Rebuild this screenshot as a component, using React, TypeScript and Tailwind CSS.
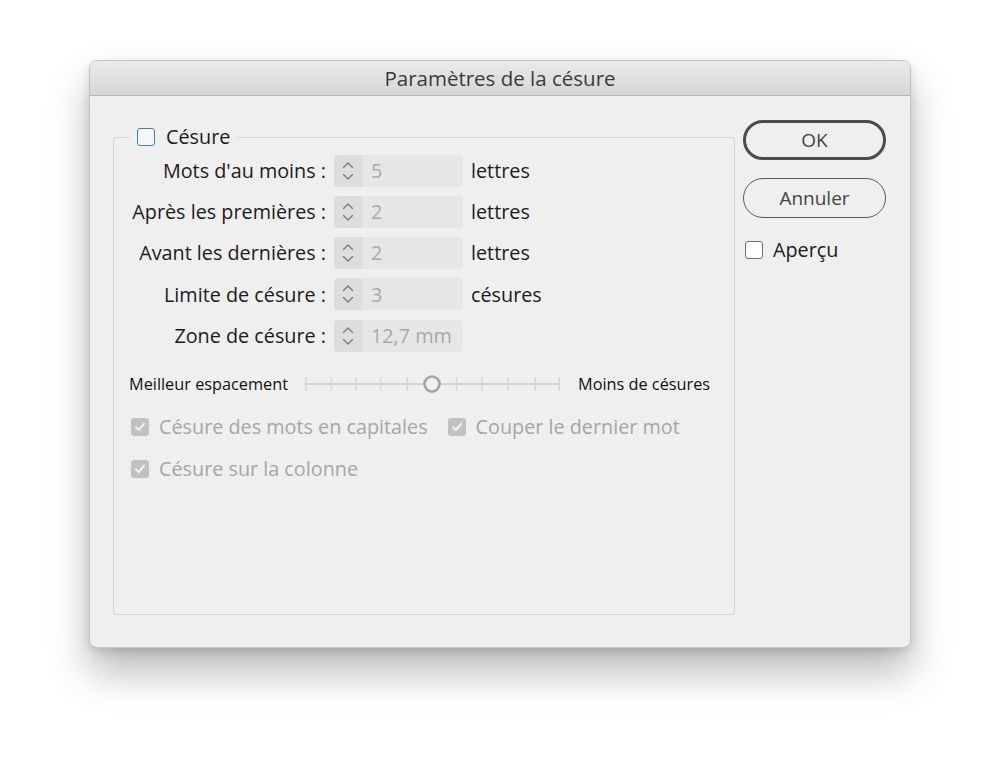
import React from "react";

const font = { fontFamily: '"Open Sans", "Noto Sans", sans-serif' };

function Stepper({ value }: { value: string }) {
  return (
    <div className="flex h-[32px] w-[129px] overflow-hidden rounded-[4px] bg-[#e6e6e6]">
      <div className="flex w-[28px] flex-col items-center justify-center bg-[#dddddd]">
        <svg width="14" height="24" viewBox="0 0 14 24" fill="none" stroke="#7a7a7a" strokeWidth="1.4" strokeLinecap="round" strokeLinejoin="round">
          <path d="M2.5 8.5 L7 4 L11.5 8.5" />
          <path d="M2.5 15.5 L7 20 L11.5 15.5" />
        </svg>
      </div>
      <div className="flex items-center pl-[9px] text-[19.8px] text-[#a9a9a9]">{value}</div>
    </div>
  );
}

function DisabledCheck() {
  return (
    <div className="flex h-[18px] w-[18px] items-center justify-center rounded-[3px] bg-[#c2c2c2]">
      <svg width="12" height="12" viewBox="0 0 12 12" fill="none" stroke="#f4f4f4" strokeWidth="2" strokeLinecap="round" strokeLinejoin="round">
        <path d="M2 6.3 L4.8 9 L10 2.8" />
      </svg>
    </div>
  );
}

function Row({ label, value, unit }: { label: string; value: string; unit: string }) {
  return (
    <div className="flex h-[41.25px] items-center">
      <div className="w-[212px] whitespace-nowrap text-right text-[19.8px] text-[#1c1c1c]">{label}</div>
      <div className="ml-[8px]">
        <Stepper value={value} />
      </div>
      <div className="ml-[8px] text-[19.8px] text-[#1c1c1c]">{unit}</div>
    </div>
  );
}

function Slider() {
  const xs = [1, 26, 51, 76, 102, 127, 152, 177, 203, 230, 254];
  return (
    <svg width="258" height="24" viewBox="0 0 258 24">
      <line x1="1" y1="12" x2="255" y2="12" stroke="#d6d6d6" strokeWidth="2" />
      {xs.map((x, i) =>
        i === 5 ? null : <line key={i} x1={x} y1="5" x2={x} y2="19" stroke="#d3d3d3" strokeWidth="1.2" />
      )}
      <circle cx="127" cy="12" r="7.5" fill="#f0f0f0" stroke="#a4a4a4" strokeWidth="2.6" />
    </svg>
  );
}

export default function App() {
  return (
    <div className="h-[765px] w-[999px] bg-white pl-[89px] pt-[60px]" style={font}>
      <div className="flex h-[588px] w-[822px] flex-col overflow-hidden rounded-[8px] border border-[#c4c4c4] bg-[#efefef] shadow-[0_24px_40px_rgba(0,0,0,0.28),0_4px_10px_rgba(0,0,0,0.12)]">
        <div className="flex h-[35px] items-center justify-center border-b border-[#b8b8b8] bg-gradient-to-b from-[#ebebeb] to-[#d6d6d6] text-[20.5px] text-[#3b3b3b]">
          Paramètres de la césure
        </div>
        <div className="flex flex-1 pl-[23px] pt-[31px]">
          <fieldset className="h-[488px] w-[622px] rounded-[4px] border border-[#d6d6d6] px-0">
            <legend className="ml-[16px] flex items-center px-[7px]">
              <div className="h-[18px] w-[18px] rounded-[3px] border-[1.5px] border-[#3f7fc2] bg-[#f6f6f6]" />
              <span className="ml-[11px] text-[19.8px] leading-[20px] text-[#1c1c1c]">Césure</span>
            </legend>
            <div className="mt-[3px] flex flex-col">
              <Row label="Mots d'au moins :" value="5" unit="lettres" />
              <Row label="Après les premières :" value="2" unit="lettres" />
              <Row label="Avant les dernières :" value="2" unit="lettres" />
              <Row label="Limite de césure :" value="3" unit="césures" />
              <Row label="Zone de césure :" value="12,7 mm" unit="" />
            </div>
            <div className="ml-[15px] mt-[16px] flex h-[24px] items-center whitespace-nowrap text-[16.3px] text-[#111]">
              <span>Meilleur espacement</span>
              <div className="ml-[17px]">
                <Slider />
              </div>
              <span className="ml-[15px]">Moins de césures</span>
            </div>
            <div className="ml-[17px] mt-[16px] flex items-center whitespace-nowrap text-[19.8px] text-[#a6a6a6]">
              <DisabledCheck />
              <span className="ml-[10px]">Césure des mots en capitales</span>
              <div className="ml-[20px]">
                <DisabledCheck />
              </div>
              <span className="ml-[10px]">Couper le dernier mot</span>
            </div>
            <div className="ml-[17px] mt-[12px] flex items-center whitespace-nowrap text-[19.8px] text-[#a6a6a6]">
              <DisabledCheck />
              <span className="ml-[10px]">Césure sur la colonne</span>
            </div>
          </fieldset>
          <div className="ml-[8px] flex w-[143px] flex-col">
            <div className="-mt-[7px] flex h-[40px] items-center justify-center rounded-full border-[3px] border-[#4b4b4b] text-[19px] text-[#444]">
              OK
            </div>
            <div className="mt-[18px] flex h-[40px] items-center justify-center rounded-full border-[1.5px] border-[#5a5a5a] text-[19px] text-[#444]">
              Annuler
            </div>
            <div className="ml-[2px] mt-[17px] flex items-center">
              <div className="h-[18px] w-[18px] rounded-[3px] border-[1.5px] border-[#707070] bg-white" />
              <span className="ml-[10px] text-[19.8px] text-[#1c1c1c]">Aperçu</span>
            </div>
          </div>
        </div>
      </div>
    </div>
  );
}
